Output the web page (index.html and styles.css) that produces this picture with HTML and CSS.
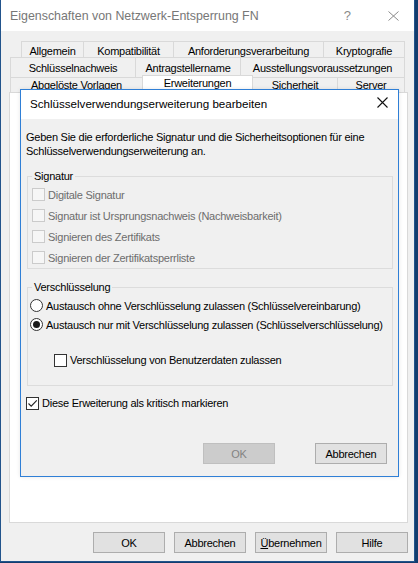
FILE: index.html
```html
<!DOCTYPE html>
<html lang="de">
<head>
<meta charset="utf-8">
<title>Eigenschaften</title>
<link rel="stylesheet" href="styles.css">
</head>
<body>
<div class="window">
  <div class="titlebar">
    <span class="title">Eigenschaften von Netzwerk-Entsperrung FN</span>
    <span class="help">?</span>
    <svg class="wclose" width="11" height="10" viewBox="0 0 11 10"><path d="M0.5 0.5 L10.5 9.5 M10.5 0.5 L0.5 9.5" stroke="#8a8a8a" stroke-width="1" fill="none"/></svg>
  </div>
  <div class="client">
    <div class="tabs">
      <div class="tabrow row1">
        <div class="tab w62">Allgemein</div>
        <div class="tab w90">Kompatibilität</div>
        <div class="tab w150">Anforderungsverarbeitung</div>
        <div class="tab w82 last">Kryptografie</div>
      </div>
      <div class="tabrow row2">
        <div class="tab w125">Schlüsselnachweis</div>
        <div class="tab w105">Antragstellername</div>
        <div class="tab w165 last">Ausstellungsvoraussetzungen</div>
      </div>
      <div class="tabrow row3">
        <div class="tab w132">Abgelöste Vorlagen</div>
        <div class="tab w110 selected">Erweiterungen</div>
        <div class="tab w85">Sicherheit</div>
        <div class="tab w68 last">Server</div>
      </div>
    </div>
    <div class="panel"></div>
    <div class="mainbuttons">
      <button class="btn">OK</button>
      <button class="btn">Abbrechen</button>
      <button class="btn"><u>Ü</u>bernehmen</button>
      <button class="btn">Hilfe</button>
    </div>
  </div>

  <div class="dialog">
    <div class="dtitle">
      <span class="dtitletext">Schlüsselverwendungserweiterung bearbeiten</span>
      <svg class="dclose" width="11" height="11" viewBox="0 0 11 11"><path d="M0.5 0.5 L10.5 10.5 M10.5 0.5 L0.5 10.5" stroke="#111" stroke-width="1.1" fill="none"/></svg>
    </div>
    <div class="dbody">
      <p class="desc">Geben Sie die erforderliche Signatur und die Sicherheitsoptionen für eine Schlüsselverwendungserweiterung an.</p>
      <fieldset class="group sig">
        <legend>Signatur</legend>
        <div class="opt disabled"><span class="cb"></span><span class="lbl">Digitale Signatur</span></div>
        <div class="opt disabled"><span class="cb"></span><span class="lbl">Signatur ist Ursprungsnachweis (Nachweisbarkeit)</span></div>
        <div class="opt disabled"><span class="cb"></span><span class="lbl">Signieren des Zertifikats</span></div>
        <div class="opt disabled"><span class="cb"></span><span class="lbl">Signieren der Zertifikatsperrliste</span></div>
      </fieldset>
      <fieldset class="group enc">
        <legend>Verschlüsselung</legend>
        <div class="opt radio-opt"><span class="rb"></span><span class="lbl">Austausch ohne Verschlüsselung zulassen (Schlüsselvereinbarung)</span></div>
        <div class="opt radio-opt"><span class="rb on"></span><span class="lbl">Austausch nur mit Verschlüsselung zulassen (Schlüsselverschlüsselung)</span></div>
        <div class="opt sub"><span class="cb en"></span><span class="lbl">Verschlüsselung von Benutzerdaten zulassen</span></div>
      </fieldset>
      <div class="opt critical"><span class="cb en"><svg width="11" height="11" viewBox="0 0 11 11"><path d="M1.5 5.5 L4.2 8.2 L9.8 2.3" stroke="#222" stroke-width="1.1" fill="none"/></svg></span><span class="lbl">Diese Erweiterung als kritisch markieren</span></div>
      <div class="dbuttons">
        <button class="btn off">OK</button>
        <button class="btn">Abbrechen</button>
      </div>
    </div>
  </div>
</div>
</body>
</html>
```

FILE: styles.css
```css
html, body {
  margin: 0;
  padding: 0;
}
body {
  width: 418px;
  height: 563px;
  overflow: hidden;
  background: #133d6e;
  font-family: "Liberation Sans", Arial, sans-serif;
  font-size: 11px;
  letter-spacing: -0.25px;
  color: #000;
}
.window {
  position: relative;
  width: 415px;
  height: 562px;
  box-sizing: border-box;
  border: 1px solid #22548c;
  border-top: 0;
  background: #f0f0f0;
  display: flex;
  flex-direction: column;
}
.titlebar {
  height: 31px;
  flex: none;
  background: #fff;
  display: flex;
  align-items: center;
}
.title {
  flex: 1;
  padding-left: 9px;
  font-size: 12.4px;
  letter-spacing: 0;
  color: #777;
}
.help {
  font-size: 13px;
  letter-spacing: 0;
  color: #8a8a8a;
  margin-right: 37px;
}
.wclose {
  margin-right: 15px;
}
.client {
  flex: 1;
  display: flex;
  flex-direction: column;
  padding: 10px 6px 0 8px;
}
.tabs {
  height: 51px;
  position: relative;
  z-index: 1;
}
.tabrow {
  display: flex;
}
.row1 { height: 16px; padding-left: 12px; }
.row2 { height: 20px; padding-left: 1px; }
.row3 { height: 15px; padding-left: 1px; }
.tab {
  box-sizing: border-box;
  border-top: 1px solid #d9d9d9;
  border-left: 1px solid #d9d9d9;
  background: #f0f0f0;
  text-align: center;
  white-space: nowrap;
  line-height: 13px;
  padding-top: 3px;
}
.tab.last { border-right: 1px solid #d9d9d9; }
.row2 .tab { padding-top: 4px; }
.row3 .tab {
  height: 15px;
  padding-top: 1px;
}
.row3 .tab.selected {
  margin-top: -2px;
  height: 18px;
  background: #fff;
  border-right: 1px solid #d9d9d9;
  margin-right: -1px;
  position: relative;
  z-index: 2;
  padding-top: 1px;
}
.w62 { width: 62px; }
.w90 { width: 90px; }
.w150 { width: 150px; }
.w82 { width: 82px; }
.w125 { width: 125px; }
.w105 { width: 105px; }
.w165 { width: 165px; }
.w132 { width: 132px; }
.w110 { width: 111px; }
.w85 { width: 85px; }
.w68 { width: 68px; }
.panel {
  height: 431px;
  box-sizing: border-box;
  border: 1px solid #d9d9d9;
  background: #fff;
}
.mainbuttons {
  display: flex;
  justify-content: flex-end;
  gap: 9px;
  margin-top: 9px;
}
.btn {
  box-sizing: border-box;
  width: 72px;
  height: 21px;
  padding: 0;
  border: 1px solid #adadad;
  background: #e1e1e1;
  font-family: "Liberation Sans", Arial, sans-serif;
  font-size: 11px;
  letter-spacing: -0.25px;
  color: #000;
}
.btn u { text-underline-offset: 1px; }
.btn.off {
  background: #cccccc;
  border-color: #bfbfbf;
  color: #838383;
}

/* inner dialog */
.dialog {
  position: absolute;
  left: 19px;
  top: 89px;
  width: 379px;
  height: 388px;
  box-sizing: border-box;
  border: 1px solid #2f7fd6;
  background: #f0f0f0;
  box-shadow: 0 0 4px rgba(0, 0, 0, 0.1);
  z-index: 5;
  display: flex;
  flex-direction: column;
}
.dtitle {
  height: 29px;
  flex: none;
  background: #fff;
  display: flex;
  align-items: center;
}
.dtitletext {
  flex: 1;
  padding-left: 9px;
  padding-bottom: 2px;
  font-size: 11.6px;
  letter-spacing: 0;
}
.dclose {
  margin-right: 10px;
  margin-bottom: 4px;
}
.dbody {
  flex: 1;
  padding: 11px 5px 0 5px;
  display: flex;
  flex-direction: column;
}
.desc {
  margin: 0;
  line-height: 14px;
}
.group {
  margin: 11px 0 0 1px;
  padding: 1px 0 0 4px;
  border: 1px solid #dcdcdc;
  min-width: 0;
}
.group legend {
  padding: 0 2px;
  line-height: 14px;
}
.enc {
  padding-top: 2px;
  padding-bottom: 15px;
}
.opt {
  display: flex;
  align-items: center;
  height: 21px;
  white-space: nowrap;
}
.opt .lbl { margin-left: 3px; }
.opt.disabled .lbl { color: #6d6d6d; }
.cb {
  box-sizing: border-box;
  width: 13px;
  height: 13px;
  flex: none;
  border: 1px solid #cbcbcb;
  background: #f6f6f6;
  display: flex;
  align-items: center;
  justify-content: center;
}
.cb.en {
  border-color: #333;
  background: #fff;
}
.radio-opt {
  height: 19px;
  margin-left: -2px;
}
.rb {
  box-sizing: border-box;
  width: 13px;
  height: 13px;
  flex: none;
  border: 1px solid #333;
  border-radius: 50%;
  background: #fff;
  display: flex;
  align-items: center;
  justify-content: center;
}
.rb.on::after {
  content: "";
  width: 7px;
  height: 7px;
  border-radius: 50%;
  background: #1a1a1a;
}
.sub {
  margin-top: 16px;
  margin-left: 22px;
  height: 20px;
}
.critical {
  margin-top: 7px;
  height: 20px;
}
.dbuttons {
  display: flex;
  justify-content: flex-end;
  gap: 40px;
  margin-top: 30px;
  padding-right: 6px;
}
```
